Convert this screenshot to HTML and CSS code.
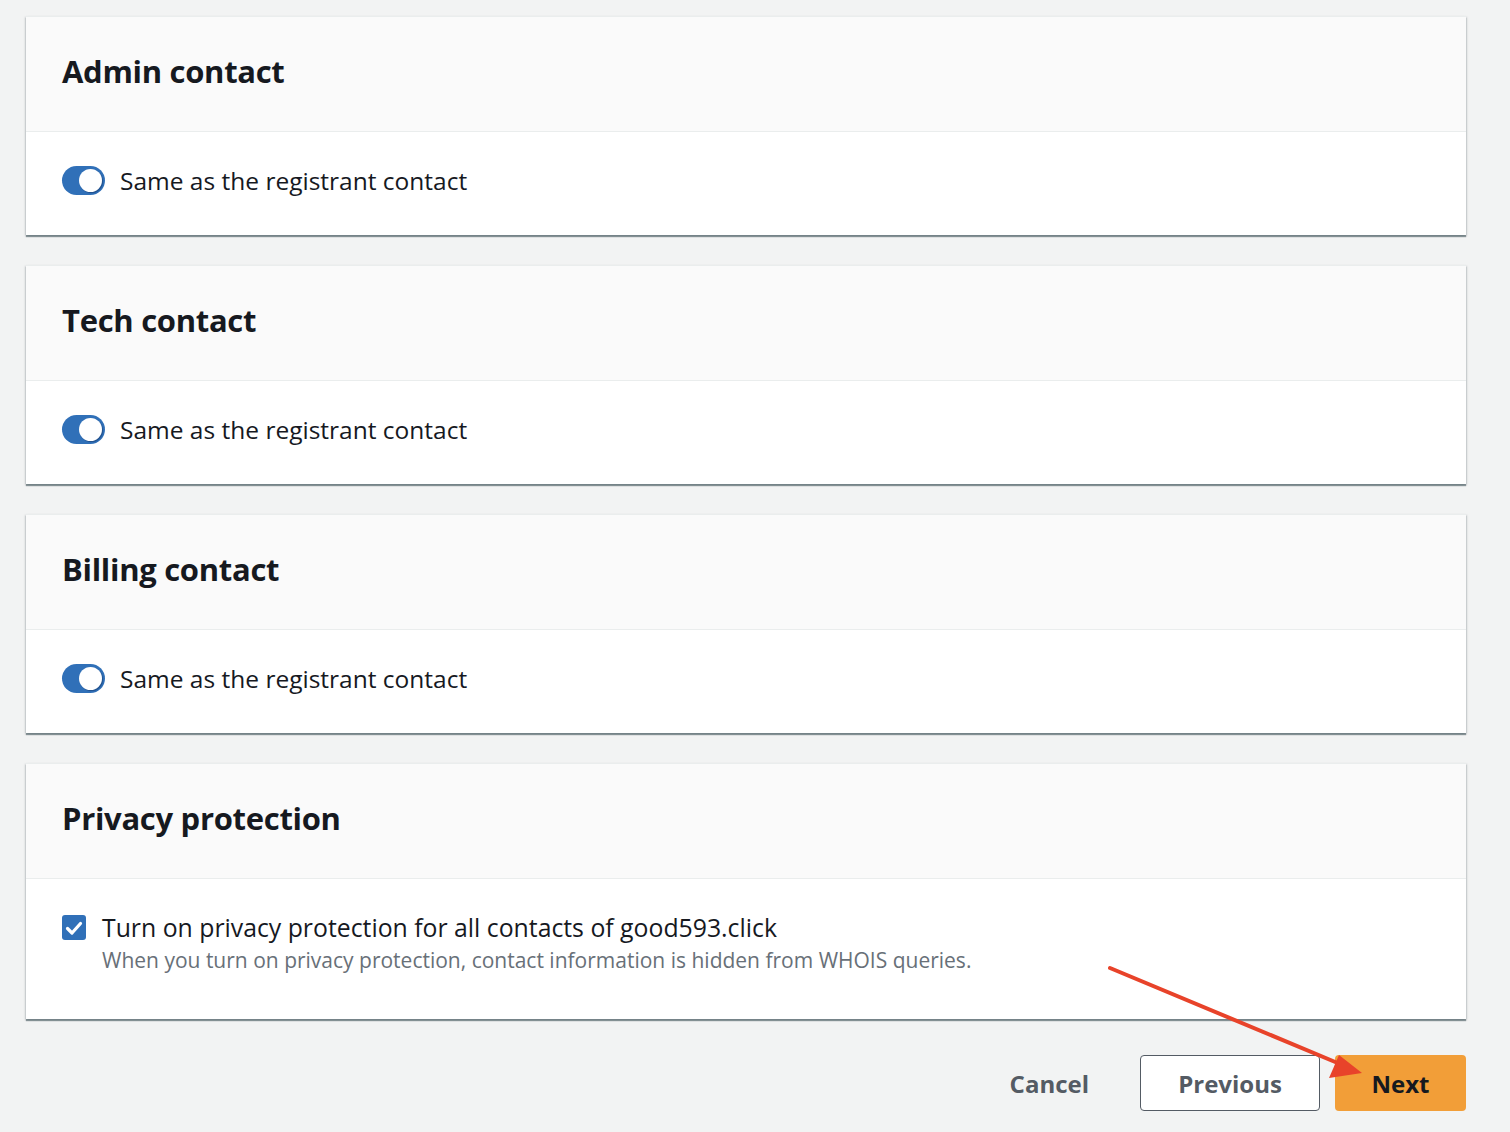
FILE: index.html
```html
<!DOCTYPE html>
<html lang="en">
<head>
<meta charset="utf-8">
<title>Contacts</title>
<link rel="stylesheet" href="styles.css">
</head>
<body>
<main class="page">
  <section class="card">
    <header class="card-head"><h2>Admin contact</h2></header>
    <div class="card-body">
      <label class="toggle-row"><span class="toggle"><span class="knob"></span></span><span>Same as the registrant contact</span></label>
    </div>
  </section>
  <section class="card">
    <header class="card-head"><h2>Tech contact</h2></header>
    <div class="card-body">
      <label class="toggle-row"><span class="toggle"><span class="knob"></span></span><span>Same as the registrant contact</span></label>
    </div>
  </section>
  <section class="card">
    <header class="card-head"><h2>Billing contact</h2></header>
    <div class="card-body">
      <label class="toggle-row"><span class="toggle"><span class="knob"></span></span><span>Same as the registrant contact</span></label>
    </div>
  </section>
  <section class="card">
    <header class="card-head"><h2>Privacy protection</h2></header>
    <div class="card-body privacy">
      <div class="check-row">
        <span class="checkbox"><svg viewBox="0 0 24 24" width="24" height="24"><path d="M5.5 12.5 L10 17 L18.5 7.5" fill="none" stroke="#fff" stroke-width="3.2" stroke-linecap="round" stroke-linejoin="round"/></svg></span>
        <div class="check-text">
          <div class="check-label">Turn on privacy protection for all contacts of good593.click</div>
          <div class="check-desc">When you turn on privacy protection, contact information is hidden from WHOIS queries.</div>
        </div>
      </div>
    </div>
  </section>
  <div class="actions">
    <button class="btn btn-link">Cancel</button>
    <button class="btn btn-normal">Previous</button>
    <button class="btn btn-primary">Next</button>
  </div>
</main>
<svg class="annotation" width="1510" height="1132" viewBox="0 0 1510 1132">
  <line x1="1110" y1="968" x2="1340" y2="1064" stroke="#e8432a" stroke-width="4" stroke-linecap="round"/>
  <polygon points="1362,1073 1329,1078 1339,1055" fill="#e8432a"/>
</svg>
</body>
</html>
```
FILE: styles.css
```css
* { box-sizing: border-box; }
html, body { margin: 0; padding: 0; }
body {
  background: #f2f3f3;
  font-family: "Open Sans", "Noto Sans", sans-serif;
  color: #16191f;
  width: 1510px;
  height: 1132px;
  overflow: hidden;
  position: relative;
}
.page {
  padding: 16px 44px 0 26px;
  display: flex;
  flex-direction: column;
  gap: 30px;
}
.card {
  background: #fff;
  box-shadow: 0 2px 1px rgba(0, 28, 36, 0.4), 1px 1px 2px rgba(0, 28, 36, 0.15), -1px 1px 2px rgba(0, 28, 36, 0.15);
  border-top: 1px solid #eaeded;
}
.card-head {
  background: #fafafa;
  height: 115px;
  border-bottom: 1px solid #eaeded;
  display: flex;
  align-items: center;
  padding: 0 36px;
}
.card-head h2 {
  margin: 0;
  font-size: 31px;
  font-weight: 700;
  letter-spacing: -0.3px;
  padding-bottom: 6px;
}
.card-body {
  height: 103px;
  display: flex;
  align-items: flex-start;
  padding: 34px 36px 0;
}
.toggle-row {
  display: flex;
  align-items: center;
  gap: 15px;
  font-size: 24.5px;
  line-height: 29px;
}
.toggle {
  width: 43px;
  height: 29px;
  border-radius: 15px;
  background: #3070b8;
  display: flex;
  align-items: center;
  justify-content: flex-end;
  padding-right: 3px;
}
.knob {
  width: 23px;
  height: 23px;
  border-radius: 50%;
  background: #fff;
  box-shadow: 1px 1px 1px rgba(0, 20, 60, 0.35);
}
.card-body.privacy {
  height: 140px;
  padding-top: 31px;
}
.check-row {
  display: flex;
  gap: 16px;
}
.checkbox {
  width: 24px;
  height: 25px;
  border-radius: 3px;
  background: #3070b8;
  margin-top: 5px;
  display: flex;
  align-items: center;
  justify-content: center;
}
.check-label {
  font-size: 24.8px;
  line-height: 34px;
}
.check-desc {
  font-size: 21px;
  line-height: 30px;
  color: #687078;
  margin-top: 1px;
}
.actions {
  margin-top: 6px;
  display: flex;
  justify-content: flex-end;
  align-items: center;
  gap: 15px;
}
.btn {
  font-family: inherit;
  font-size: 24px;
  font-weight: 700;
  height: 56px;
  border-radius: 4px;
  cursor: pointer;
}
.btn-link {
  background: none;
  border: none;
  color: #545b64;
  padding: 0 36px 0 0;
}
.btn-normal {
  background: #fff;
  border: 1.5px solid #545b64;
  color: #545b64;
  width: 180px;
}
.btn-primary {
  background: #f29e38;
  border: none;
  color: #16191f;
  width: 131px;
}
.annotation {
  position: absolute;
  left: 0;
  top: 0;
  pointer-events: none;
}
```
